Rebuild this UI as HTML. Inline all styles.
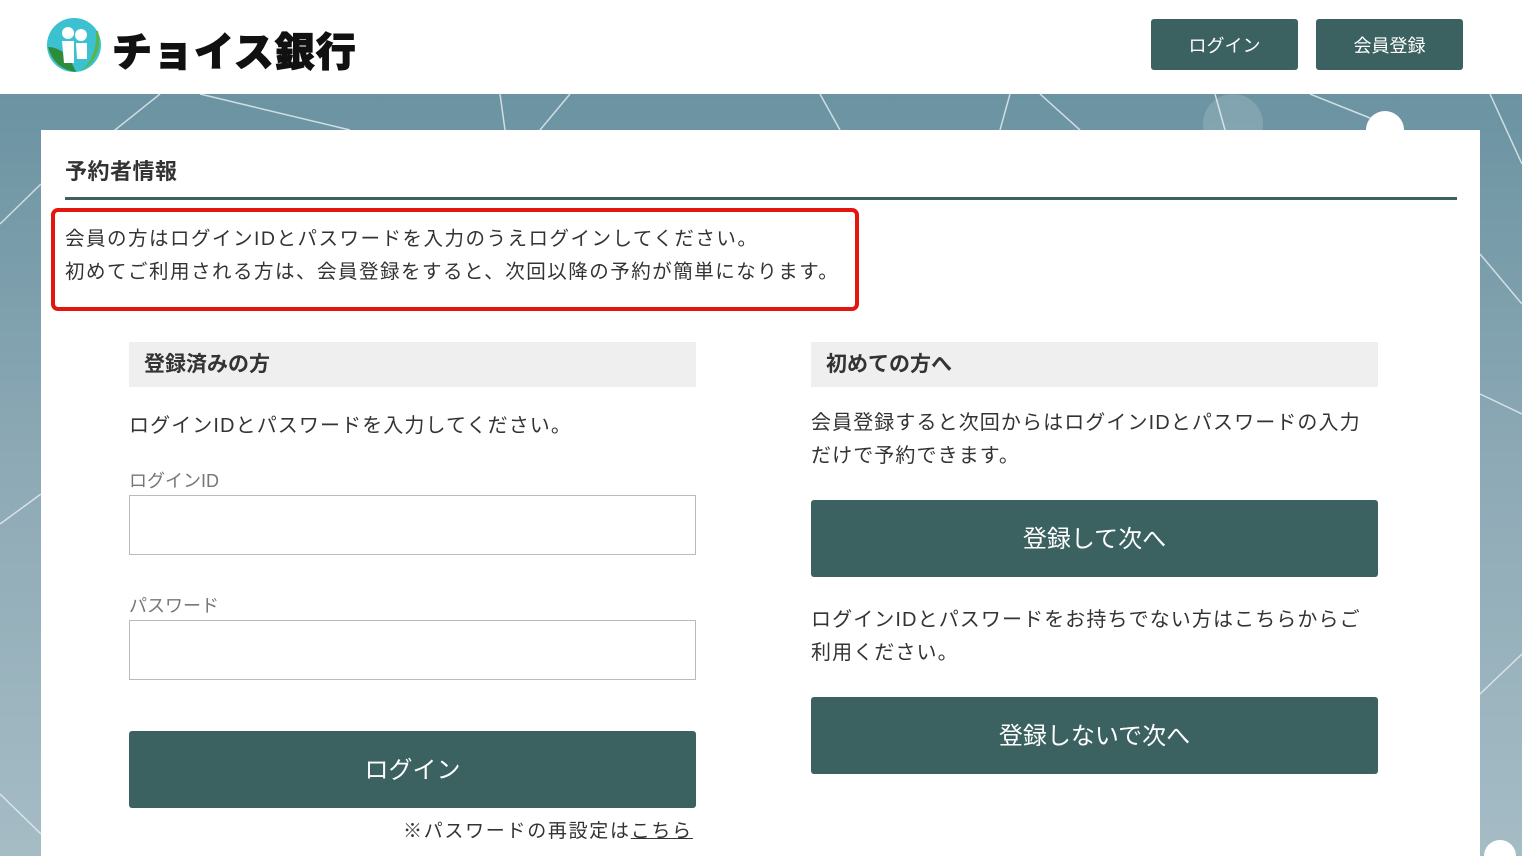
<!DOCTYPE html>
<html><head><meta charset="utf-8"><style>
*{margin:0;padding:0;box-sizing:border-box}
body{width:1522px;height:856px;overflow:hidden;position:relative;font-family:"Liberation Sans","Noto Sans CJK JP",sans-serif;color:#333;background:#fff}
.bg{position:absolute;left:0;top:94px;width:1522px;height:762px;background:linear-gradient(180deg,#6b93a2 0%,#8eaab6 50%,#a5bcc5 100%);overflow:hidden}
.hdr{position:absolute;left:0;top:0;width:1522px;height:94px;background:#fff}
.btn{position:absolute;background:#3b6160;color:#fff;border-radius:3px;display:flex;align-items:center;justify-content:center}
.card{position:absolute;left:41px;top:130px;width:1439px;height:726px;background:#fff}
.a{position:absolute;white-space:nowrap}
.inp{position:absolute;border:1px solid #bbb;background:#fff}
.sec{position:absolute;background:#efefef;font-weight:bold;font-size:21px;padding-left:15px;display:flex;align-items:center;color:#333}
</style></head><body>
<div class="bg">
<svg width="1522" height="762" style="position:absolute;left:0;top:0">
<g stroke="#e8f0f2" stroke-width="1.5" fill="none" opacity=".8">
<line x1="160" y1="0" x2="110" y2="40"/><line x1="200" y1="0" x2="350" y2="36"/><line x1="500" y1="0" x2="505" y2="36"/><line x1="570" y1="0" x2="540" y2="36"/><line x1="820" y1="0" x2="840" y2="36"/><line x1="1010" y1="0" x2="1000" y2="36"/><line x1="1040" y1="0" x2="1080" y2="36"/><line x1="1215" y1="0" x2="1225" y2="36"/><line x1="1310" y1="0" x2="1385" y2="30"/><line x1="1490" y1="0" x2="1522" y2="70"/>
<line x1="0" y1="130" x2="41" y2="90"/><line x1="1480" y1="160" x2="1522" y2="210"/><line x1="1480" y1="300" x2="1522" y2="320"/><line x1="0" y1="430" x2="41" y2="400"/><line x1="1480" y1="600" x2="1522" y2="560"/><line x1="0" y1="700" x2="41" y2="740"/>
</g>
<circle cx="1233" cy="30" r="30" fill="#fff" opacity=".15"/>
<circle cx="1385" cy="36" r="19" fill="#fff"/>
<circle cx="1500" cy="762" r="16" fill="#fff"/>
</svg>
</div>
<div class="hdr">
<svg width="56" height="56" style="position:absolute;left:46px;top:17px" viewBox="0 0 56 56">
<circle cx="28" cy="28" r="27" fill="#3bc1cf"/>
<path d="M2 30 Q20 30 30 55 Q8 52 2 30Z" fill="#2e8b3a"/>
<path d="M52 14 Q58 40 34 55 Q52 40 50 14Z" fill="#5bb544"/>
<circle cx="22" cy="16" r="6" fill="#fff"/><circle cx="35" cy="18" r="6" fill="#fff"/>
<path d="M16 24 h12 v22 h-10z M30 26 h11 v16 h-10z" fill="#fff"/>
</svg>
<div class="a" style="left:112px;top:20px;font-size:40px;font-weight:900;color:#111;letter-spacing:1px;-webkit-text-stroke:1px #111">チョイス銀行</div>
<div class="btn" style="left:1151px;top:19px;width:147px;height:51px;font-size:18px">ログイン</div>
<div class="btn" style="left:1316px;top:19px;width:147px;height:51px;font-size:18px">会員登録</div>
</div>
<div class="card"></div>
<div class="a" style="left:65px;top:154px;font-size:22px;font-weight:bold;color:#333;letter-spacing:0.5px">予約者情報</div>
<div style="position:absolute;left:65px;top:197px;width:1392px;height:3px;background:#3b6160"></div>
<div style="position:absolute;left:51px;top:208px;width:808px;height:103px;border:4px solid #e3150f;border-radius:7px"></div>
<div class="a" style="left:65px;top:223px;font-size:19.5px;line-height:33px;letter-spacing:1.5px">会員の方はログインIDとパスワードを入力のうえログインしてください。<br>初めてご利用される方は、会員登録をすると、次回以降の予約が簡単になります。</div>
<div class="sec" style="left:129px;top:342px;width:567px;height:45px;padding-bottom:3px">登録済みの方</div>
<div class="sec" style="left:811px;top:342px;width:567px;height:45px;padding-bottom:3px">初めての方へ</div>
<div class="a" style="left:129px;top:409px;font-size:20px;letter-spacing:1.1px">ログインIDとパスワードを入力してください。</div>
<div class="a" style="left:129px;top:467px;font-size:18px;color:#777">ログインID</div>
<div class="inp" style="left:129px;top:495px;width:567px;height:60px"></div>
<div class="a" style="left:129px;top:592px;font-size:18px;color:#777">パスワード</div>
<div class="inp" style="left:129px;top:620px;width:567px;height:60px"></div>
<div class="btn" style="left:129px;top:731px;width:567px;height:77px;font-size:24px;padding-bottom:4px">ログイン</div>
<div class="a" style="left:403px;top:816px;font-size:19px;letter-spacing:1.7px">※パスワードの再設定は<span style="text-decoration:underline">こちら</span></div>
<div class="a" style="left:811px;top:407px;font-size:20px;line-height:33px;letter-spacing:1.1px">会員登録すると次回からはログインIDとパスワードの入力<br>だけで予約できます。</div>
<div class="btn" style="left:811px;top:500px;width:567px;height:77px;font-size:24px;padding-bottom:5px">登録して次へ</div>
<div class="a" style="left:811px;top:604px;font-size:20px;line-height:33px;letter-spacing:1.1px">ログインIDとパスワードをお持ちでない方はこちらからご<br>利用ください。</div>
<div class="btn" style="left:811px;top:697px;width:567px;height:77px;font-size:24px;padding-bottom:5px">登録しないで次へ</div>
</body></html>
